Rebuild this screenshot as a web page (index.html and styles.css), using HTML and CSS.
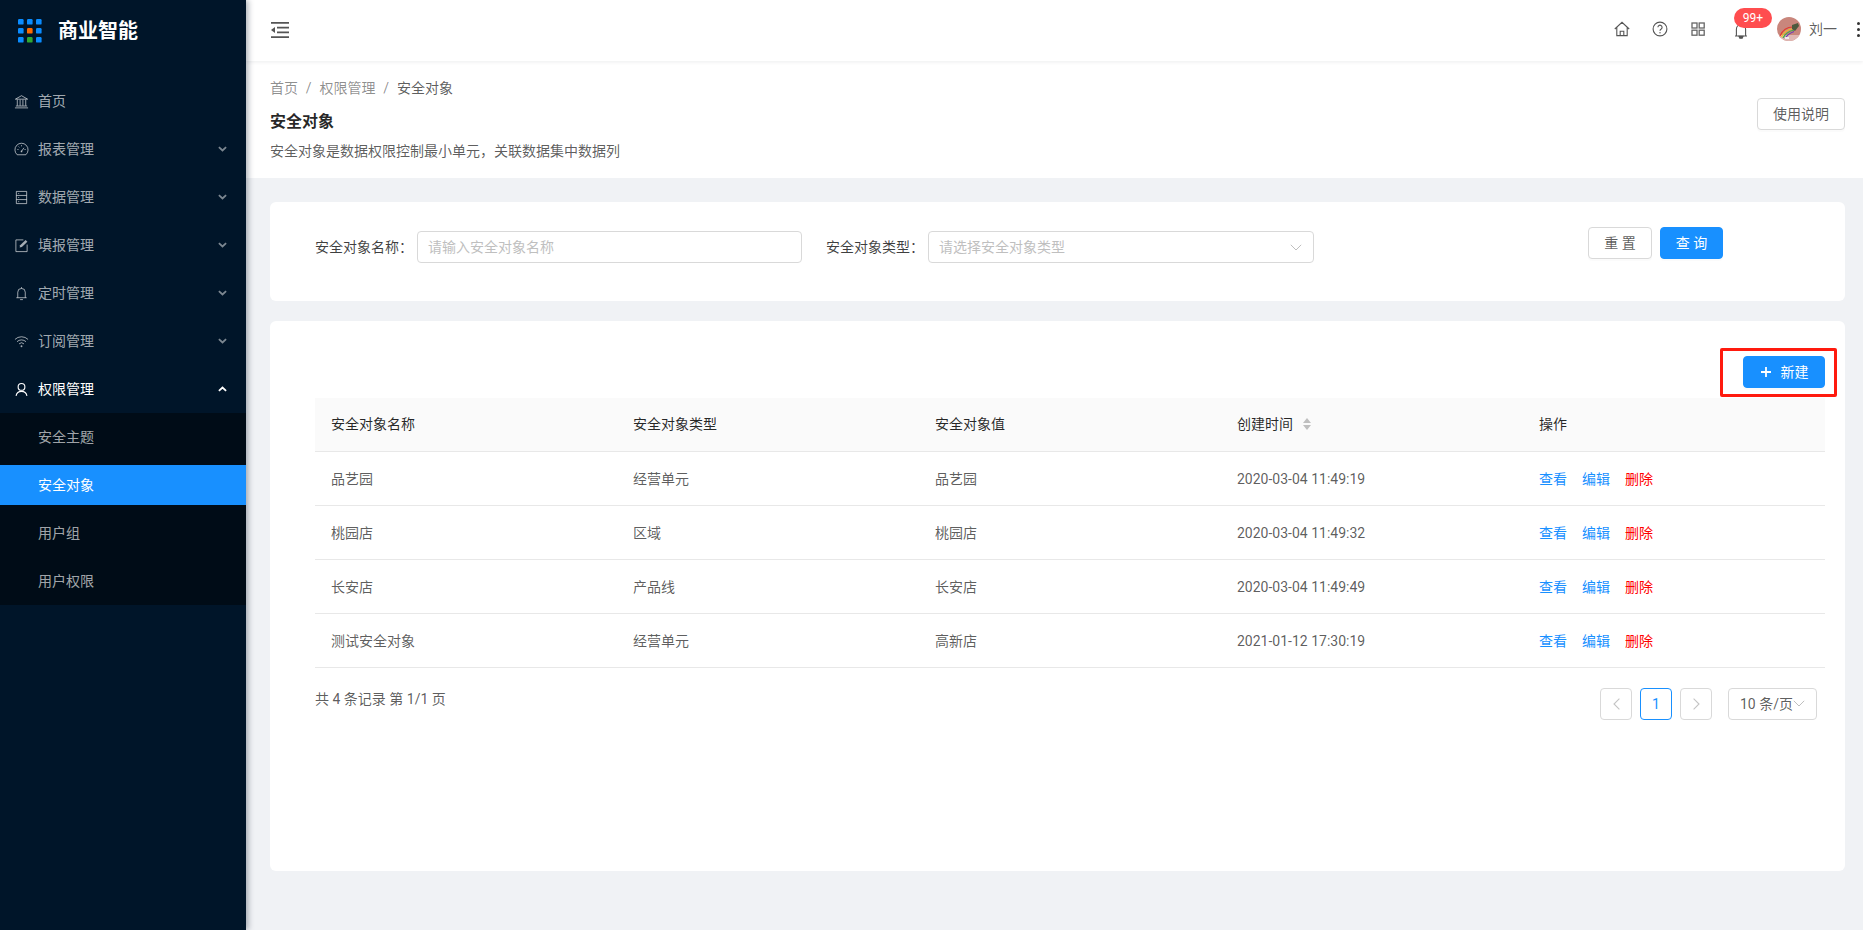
FILE: index.html
```html
<!DOCTYPE html>
<html lang="zh-CN">
<head>
<meta charset="utf-8">
<title>安全对象</title>
<link rel="stylesheet" href="styles.css">
</head>
<body>
<aside class="sidebar">
  <div class="logo">
    <svg class="logo-mark" width="24" height="24" viewBox="0 0 24 24">
      <rect x="0" y="0" width="5.6" height="5.6" rx="1.2" fill="#0a8cff"/><rect x="9" y="0" width="5.6" height="5.6" rx="1.2" fill="#0a8cff"/><rect x="18" y="0" width="5.6" height="5.6" rx="1.2" fill="#0a8cff"/>
      <rect x="0" y="9" width="5.6" height="5.6" rx="1.2" fill="#0a8cff"/><rect x="9" y="9" width="5.6" height="5.6" rx="1.2" fill="#ff6a00"/><rect x="18" y="9" width="5.6" height="5.6" rx="1.2" fill="#0a8cff"/>
      <rect x="0" y="18" width="5.6" height="5.6" rx="1.2" fill="#0a8cff"/><rect x="9" y="18" width="5.6" height="5.6" rx="1.2" fill="#2fa832"/><rect x="18" y="18" width="5.6" height="5.6" rx="1.2" fill="#0a8cff"/>
    </svg>
    <span class="logo-text">商业智能</span>
  </div>
  <nav class="menu">
    <a class="menu-item">
      <svg class="menu-icon" viewBox="0 0 16 16" fill="none" stroke="currentColor"><path d="M1.5 5.5 8 1.8l6.5 3.7zM3.5 6v6.5M6.5 6v6.5M9.5 6v6.5M12.5 6v6.5M2 12.8h12M1 14.8h14"/></svg>
      <span>首页</span>
    </a>
    <a class="menu-item">
      <svg class="menu-icon" viewBox="0 0 16 16" fill="none" stroke="currentColor"><path d="M3.4 13.6a7 7 0 1 1 9.2 0z"/><path d="M8 10l2.6-3.8M8 3.4v1.2M3.6 8h1.2M11.2 8h1.2M4.9 4.9l.8.8" /><circle cx="8" cy="10" r=".9" fill="currentColor" stroke="none"/></svg>
      <span>报表管理</span>
      <svg class="chev" viewBox="0 0 10 6"><path d="M1 1l4 3.6L9 1" fill="none" stroke="currentColor" stroke-width="2"/></svg>
    </a>
    <a class="menu-item">
      <svg class="menu-icon" viewBox="0 0 16 16" fill="none" stroke="currentColor"><path d="M2.5 1.5h11v13h-11zM2.5 5.8h11M2.5 10.2h11"/><path d="M4.5 3.7h1M4.5 8h1M4.5 12.4h1"/></svg>
      <span>数据管理</span>
      <svg class="chev" viewBox="0 0 10 6"><path d="M1 1l4 3.6L9 1" fill="none" stroke="currentColor" stroke-width="2"/></svg>
    </a>
    <a class="menu-item">
      <svg class="menu-icon" viewBox="0 0 16 16" fill="none" stroke="currentColor"><path d="M10 2H2v12.5h12V7"/><path d="M6 10.2l.5-2.4L12.4 2l1.9 1.9-5.9 5.8z" fill="currentColor" stroke="none"/></svg>
      <span>填报管理</span>
      <svg class="chev" viewBox="0 0 10 6"><path d="M1 1l4 3.6L9 1" fill="none" stroke="currentColor" stroke-width="2"/></svg>
    </a>
    <a class="menu-item">
      <svg class="menu-icon" viewBox="0 0 16 16" fill="none" stroke="currentColor"><path d="M4 12.5V6.6a4 4 0 0 1 8 0v5.9M2.5 12.5h11M6.5 14.5h3M8 1.2v1.4"/></svg>
      <span>定时管理</span>
      <svg class="chev" viewBox="0 0 10 6"><path d="M1 1l4 3.6L9 1" fill="none" stroke="currentColor" stroke-width="2"/></svg>
    </a>
    <a class="menu-item">
      <svg class="menu-icon" viewBox="0 0 16 16" fill="none" stroke="currentColor"><path d="M1 5.8a10 10 0 0 1 14 0M3.2 8.2a7 7 0 0 1 9.6 0M5.4 10.5a3.8 3.8 0 0 1 5.2 0"/><circle cx="8" cy="13" r="1" fill="currentColor" stroke="none"/></svg>
      <span>订阅管理</span>
      <svg class="chev" viewBox="0 0 10 6"><path d="M1 1l4 3.6L9 1" fill="none" stroke="currentColor" stroke-width="2"/></svg>
    </a>
    <a class="menu-item is-open">
      <svg class="menu-icon" viewBox="0 0 16 16" fill="none" stroke="currentColor" stroke-width="1.2"><circle cx="8" cy="5.2" r="3.6"/><path d="M2.2 14.8a5.9 5.9 0 0 1 11.6 0"/></svg>
      <span>权限管理</span>
      <svg class="chev" viewBox="0 0 10 6"><path d="M1 5l4-3.6L9 5" fill="none" stroke="currentColor" stroke-width="2"/></svg>
    </a>
    <div class="submenu">
      <a class="sub-item">安全主题</a>
      <a class="sub-item is-active">安全对象</a>
      <a class="sub-item">用户组</a>
      <a class="sub-item">用户权限</a>
    </div>
  </nav>
</aside>

<div class="main">
  <header class="topbar">
    <svg class="collapse" viewBox="0 0 18 16"><path d="M0 .8h18M6 5.6h12M6 10.4h12M0 15.2h18" stroke="#555" stroke-width="1.7" fill="none"/><path d="M0 8l4-3v6z" fill="#555"/></svg>
    <div class="top-actions">
      <svg class="top-icon" viewBox="0 0 16 16" fill="none" stroke="#555" stroke-width="1.1"><path d="M.8 8 8 1.3 15.2 8M2.8 6.4v8.2h10.4V6.4M6.2 14.6v-4.4h3.6v4.4"/></svg>
      <svg class="top-icon" viewBox="0 0 16 16" fill="none" stroke="#555" stroke-width="1.1"><circle cx="8" cy="8" r="6.9"/><path d="M5.9 6.2a2.1 2.1 0 1 1 3.3 1.8c-.8.5-1.2.9-1.2 1.8"/><circle cx="8" cy="11.8" r=".7" fill="#555" stroke="none"/></svg>
      <svg class="top-icon" viewBox="0 0 16 16" fill="none" stroke="#666" stroke-width="1.3"><rect x="2" y="2" width="5" height="5"/><rect x="9.2" y="2" width="5" height="5"/><rect x="2" y="9.2" width="5" height="5"/><rect x="9.2" y="9.2" width="5" height="5"/></svg>
      <div class="bell">
        <svg class="top-icon" viewBox="0 0 16 16" fill="none" stroke="#555" stroke-width="1.1"><path d="M3.4 13V6.2a4.6 4.6 0 0 1 9.2 0V13M2 13h12"/><path d="M6 13.4h4l-.8 1.8H6.8z" fill="#555"/></svg>
        <span class="badge">99+</span>
      </div>
      <svg class="avatar" viewBox="0 0 24 24">
        <defs><clipPath id="avatar-clip"><circle cx="12" cy="12" r="12"/></clipPath></defs>
        <g clip-path="url(#avatar-clip)">
          <rect width="24" height="24" fill="#c9867c"/>
          <rect y="18" width="24" height="6" fill="#e0b8b4"/>
          <path d="M3 19C6 12 11 10 16 10" fill="none" stroke="#e23b2e" stroke-width="1.2"/>
          <path d="M4.5 20C7 14 12 12 17 11.5" fill="none" stroke="#f2c521" stroke-width="1.2"/>
          <path d="M6 21C8.5 16 12 14 17 13" fill="none" stroke="#3eae46" stroke-width="1.2"/>
          <path d="M8 21.5C10 18 13 16 17 14.5" fill="none" stroke="#6b3fb5" stroke-width="1.2"/>
          <path d="M15 8l6-2 1 3-4 5-3-2z" fill="#4d5a3e"/>
          <rect x="8" y="20" width="4" height="2" fill="#f2e8ee"/>
        </g>
      </svg>
      <span class="user-name">刘一</span>
      <span class="more"><i></i><i></i><i></i></span>
    </div>
  </header>

  <section class="page-head">
    <div class="page-info">
      <div class="breadcrumb">
        <span>首页</span><span class="sep">/</span><span>权限管理</span><span class="sep">/</span><span class="crumb-last">安全对象</span>
      </div>
      <h1 class="page-title">安全对象</h1>
      <p class="page-desc">安全对象是数据权限控制最小单元，关联数据集中数据列</p>
    </div>
    <button class="btn btn-help">使用说明</button>
  </section>

  <div class="content">
    <section class="card filter-card">
      <div class="field">
        <label class="field-label">安全对象名称：</label>
        <div class="control">请输入安全对象名称</div>
      </div>
      <div class="field">
        <label class="field-label">安全对象类型：</label>
        <div class="control control-select">
          请选择安全对象类型
          <svg class="select-arrow" viewBox="0 0 12 7"><path d="M.8.8 6 6l5.2-5.2" fill="none" stroke="#bfbfbf"/></svg>
        </div>
      </div>
      <div class="filter-actions">
        <button class="btn btn-reset">重 置</button>
        <button class="btn btn-query btn-primary">查 询</button>
      </div>
    </section>

    <section class="card table-card">
      <div class="table-tools">
        <div class="new-wrap">
          <button class="btn btn-primary btn-new">
            <svg class="plus" viewBox="0 0 10 10"><path d="M5 0v10M0 5h10" stroke="#fff" stroke-width="1.8"/></svg>
            新建
          </button>
          <span class="highlight"></span>
        </div>
      </div>

      <table class="table">
        <thead>
          <tr>
            <th>安全对象名称</th>
            <th>安全对象类型</th>
            <th>安全对象值</th>
            <th><span class="th-sort">创建时间
              <svg class="sorter" viewBox="0 0 8 12"><path d="M4 0l4 5H0zM4 12 0 7h8z" fill="#bfbfbf"/></svg></span></th>
            <th>操作</th>
          </tr>
        </thead>
        <tbody>
          <tr>
            <td>品艺园</td><td>经营单元</td><td>品艺园</td><td>2020-03-04 11:49:19</td>
            <td class="ops"><a class="link">查看</a><a class="link">编辑</a><a class="link link-danger">删除</a></td>
          </tr>
          <tr>
            <td>桃园店</td><td>区域</td><td>桃园店</td><td>2020-03-04 11:49:32</td>
            <td class="ops"><a class="link">查看</a><a class="link">编辑</a><a class="link link-danger">删除</a></td>
          </tr>
          <tr>
            <td>长安店</td><td>产品线</td><td>长安店</td><td>2020-03-04 11:49:49</td>
            <td class="ops"><a class="link">查看</a><a class="link">编辑</a><a class="link link-danger">删除</a></td>
          </tr>
          <tr>
            <td>测试安全对象</td><td>经营单元</td><td>高新店</td><td>2021-01-12 17:30:19</td>
            <td class="ops"><a class="link">查看</a><a class="link">编辑</a><a class="link link-danger">删除</a></td>
          </tr>
        </tbody>
      </table>

      <div class="table-foot">
        <span class="total">共 4 条记录 第 1/1 页</span>
        <div class="pager">
          <span class="page-btn"><svg class="page-arrow" viewBox="0 0 7 12"><path d="M6.4.6 1 6l5.4 5.4" fill="none" stroke="#c4c4c4" stroke-width="1.1"/></svg></span>
          <span class="page-btn is-current">1</span>
          <span class="page-btn"><svg class="page-arrow" viewBox="0 0 7 12"><path d="M.6.6 6 6 .6 11.4" fill="none" stroke="#c4c4c4" stroke-width="1.1"/></svg></span>
          <span class="page-size">10 条/页<svg class="size-arrow" viewBox="0 0 12 7"><path d="M.8.8 6 6l5.2-5.2" fill="none" stroke="#bfbfbf"/></svg></span>
        </div>
      </div>
    </section>
  </div>
</div>
</body>
</html>
```
FILE: styles.css
```css
* { box-sizing: border-box; }
html, body { height: 100%; }
body {
  margin: 0;
  display: flex;
  overflow: hidden;
  background: #f0f2f5;
  color: rgba(0, 0, 0, .65);
  font: 14px/22px Roboto, "Noto Sans CJK SC", sans-serif;
}
a { text-decoration: none; }

/* Sidebar */
.sidebar {
  flex: 0 0 246px;
  height: 930px;
  background: #001529;
  box-shadow: 2px 0 6px rgba(0, 21, 41, .35);
  position: relative;
  z-index: 2;
}
.logo {
  height: 61px;
  padding-left: 18px;
  display: flex;
  align-items: center;
  gap: 16px;
}
.logo-mark { flex: none; }
.logo-text { color: #fff; font-size: 20px; font-weight: 700; line-height: 28px; }
.menu { display: flex; flex-direction: column; padding-top: 16px; }
.menu-item {
  height: 48px;
  padding-left: 14px;
  display: flex;
  align-items: center;
  gap: 9px;
  color: rgba(255, 255, 255, .65);
}
.menu-icon { width: 15px; height: 15px; flex: none; overflow: visible; }
.chev { width: 9px; height: 6px; margin-left: auto; margin-right: 19px; opacity: .75; }
.menu-item.is-open { color: #fff; }
.menu-item.is-open .chev { opacity: 1; }
.submenu { background: #000c17; display: flex; flex-direction: column; }
.sub-item {
  height: 40px;
  margin: 4px 0;
  padding-left: 38px;
  line-height: 40px;
  color: rgba(255, 255, 255, .65);
}
.sub-item.is-active { background: #1890ff; color: #fff; }

/* Main column */
.main { flex: 1; min-width: 0; display: flex; flex-direction: column; }
.topbar {
  height: 61px;
  flex: none;
  padding: 0 3px 3px 25px;
  display: flex;
  align-items: center;
  background: #fff;
  box-shadow: 0 1px 4px rgba(0, 21, 41, .08);
  position: relative;
}
.collapse { width: 18px; height: 16px; margin-top: 2px; }
.top-actions { margin-left: auto; display: flex; align-items: center; }
.top-icon { width: 16px; height: 16px; display: block; margin-left: 22px; }
.bell { position: relative; margin: 4px 0 0 5px; }
.badge {
  position: absolute;
  top: -15px;
  left: 23px;
  width: 38px;
  height: 20px;
  border-radius: 10px;
  background: #ff4d4f;
  color: #fff;
  font-size: 12px;
  line-height: 20px;
  text-align: center;
}
.avatar { width: 24px; height: 24px; margin-left: 28px; display: block; }
.user-name { margin-left: 8px; color: rgba(0, 0, 0, .65); }
.more { margin-left: 20px; width: 3px; display: flex; flex-direction: column; gap: 3px; }
.more i { width: 3px; height: 3px; border-radius: 50%; background: #333; }

.page-head {
  flex: none;
  padding: 16px 18px 16px 24px;
  display: flex;
  justify-content: space-between;
  align-items: flex-start;
  background: #fff;
}
.breadcrumb { color: rgba(0, 0, 0, .45); }
.sep { display: inline-block; width: 21.5px; text-align: center; }
.crumb-last { color: rgba(0, 0, 0, .65); }
.page-title {
  margin: 11px 0 0;
  font-size: 16px;
  font-weight: 700;
  line-height: 24px;
  color: rgba(0, 0, 0, .85);
}
.page-desc { margin: 6px 0 0; }

.btn {
  height: 32px;
  border: 1px solid #d9d9d9;
  border-radius: 4px;
  background: #fff;
  color: rgba(0, 0, 0, .65);
  font: inherit;
  padding: 0;
  box-shadow: 0 2px 0 rgba(0, 0, 0, .015);
}
.btn-help { width: 88px; margin-top: 21px; }
.btn-primary { background: #1890ff; border-color: #1890ff; color: #fff; }

.content { flex: 1; padding: 24px 18px 0 24px; display: flex; flex-direction: column; gap: 20px; }
.card { background: #fff; border-radius: 6px; }
.filter-card {
  height: 99px;
  padding: 25px 122px 0 45px;
  display: flex;
  align-items: flex-start;
}
.field { display: flex; align-items: center; margin-top: 4px; margin-right: 24px; }
.field-label { width: 102px; color: rgba(0, 0, 0, .75); white-space: nowrap; }
.control {
  width: 385px;
  height: 32px;
  padding: 0 10px;
  border: 1px solid #d9d9d9;
  border-radius: 4px;
  line-height: 28px;
  color: #bfbfbf;
  display: flex;
  align-items: center;
  justify-content: space-between;
}
.control-select { width: 386px; }
.select-arrow { width: 12px; height: 7px; margin-right: 1px; }
.filter-actions { margin-left: auto; display: flex; gap: 8px; }
.btn-reset { width: 64px; }
.btn-query { width: 63px; }

.table-card { height: 550px; padding: 35px 20px 0 45px; }
.table-tools { display: flex; justify-content: flex-end; margin-bottom: 10px; }
.new-wrap { position: relative; }
.btn-new {
  width: 82px;
  padding-left: 1px;
  display: flex;
  align-items: center;
  justify-content: center;
  gap: 10px;
}
.plus { width: 10px; height: 10px; }
.highlight {
  position: absolute;
  top: -8px;
  left: -23px;
  right: -12px;
  bottom: -9px;
  border: 3px solid #ff1a0e;
  border-radius: 2px;
  pointer-events: none;
}
.table { width: 1510px; border-collapse: collapse; table-layout: fixed; }
.table th, .table td {
  height: 54px;
  padding: 2px 16px 0;
  text-align: left;
  font-weight: 400;
  border-bottom: 1px solid #e8e8e8;
}
.table th { height: 53px; padding-top: 0; background: #fafafa; color: rgba(0, 0, 0, .85); }
.th-sort { display: inline-flex; align-items: center; gap: 10px; }
.sorter { width: 8px; height: 12px; }
.ops .link { margin-right: 15px; }
.link { color: #1890ff; }
.link-danger { color: #ff0000; }

.table-foot {
  margin-top: 20px;
  padding-right: 8px;
  display: flex;
  justify-content: space-between;
  align-items: flex-start;
}
.pager { display: flex; align-items: center; gap: 8px; }
.page-btn {
  width: 32px;
  height: 32px;
  border: 1px solid #d9d9d9;
  border-radius: 4px;
  display: flex;
  align-items: center;
  justify-content: center;
}
.page-btn.is-current { border-color: #1890ff; color: #1890ff; }
.page-arrow { width: 7px; height: 12px; }
.page-size {
  margin-left: 8px;
  width: 89px;
  height: 32px;
  padding: 0 6px 0 11px;
  border: 1px solid #d9d9d9;
  border-radius: 4px;
  display: flex;
  align-items: center;
  gap: 0;
  white-space: nowrap;
}
.size-arrow { width: 12px; height: 7px; }
```
